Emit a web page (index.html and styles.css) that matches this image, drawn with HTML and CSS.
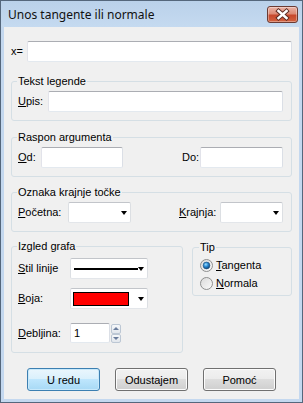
FILE: index.html
```html
<!DOCTYPE html>
<html>
<head>
<meta charset="utf-8">
<link rel="stylesheet" href="styles.css">
<title>Unos tangente ili normale</title>
</head>
<body>
<div class="window">
	<div class="titlebar">
		<span class="title">Unos tangente ili normale</span>
		<div class="close">
			<svg width="31" height="17" viewBox="0 0 31 17">
				<path d="M11.5 5 L19.5 12 M19.5 5 L11.5 12" stroke="#5a2a22" stroke-width="4.4" stroke-linecap="square"/>
				<path d="M11.5 5 L19.5 12 M19.5 5 L11.5 12" stroke="#ffffff" stroke-width="2.5" stroke-linecap="square"/>
			</svg>
		</div>
	</div>
	<div class="client">
		<div class="xrow">
			<label>x=</label>
			<input class="edit" type="text">
		</div>

		<fieldset class="group g-legend">
			<legend>Tekst legende</legend>
			<div class="row r-upis">
				<label><u>U</u>pis:</label>
				<input class="edit" type="text">
			</div>
		</fieldset>

		<fieldset class="group g-range">
			<legend>Raspon argumenta</legend>
			<div class="row r-range">
				<label><u>O</u>d:</label>
				<input class="edit" type="text">
				<span></span>
				<label>Do:</label>
				<input class="edit" type="text">
			</div>
		</fieldset>

		<fieldset class="group g-mark">
			<legend>Oznaka krajnje točke</legend>
			<div class="row r-mark">
				<label><u>P</u>očetna:</label>
				<div class="combo"><span class="arrow"></span></div>
				<span></span>
				<label><u>K</u>rajnja:</label>
				<div class="combo"><span class="arrow"></span></div>
			</div>
		</fieldset>

		<div class="pair">
			<fieldset class="group graph">
				<legend>Izgled grafa</legend>
				<div class="row r-graph">
					<label><u>S</u>til linije</label>
					<div class="combo"><span class="line"></span><span class="arrow"></span></div>
				</div>
				<div class="row r-graph r-color">
					<label><u>B</u>oja:</label>
					<div class="combo"><span class="swatch"></span><span class="arrow"></span></div>
				</div>
				<div class="row r-graph r-width">
					<label><u>D</u>ebljina:</label>
					<div class="spinner">
						<input class="edit" type="text" value="1">
						<div class="spin">
							<div class="spin-btn"><span class="up"></span></div>
							<div class="spin-btn"><span class="down"></span></div>
						</div>
					</div>
				</div>
			</fieldset>

			<fieldset class="group tip">
				<legend>Tip</legend>
				<div class="radio">
					<svg width="13" height="13" viewBox="0 0 13 13">
						<defs>
							<linearGradient id="rb1" x1="0" y1="0" x2="1" y2="1">
								<stop offset="0" stop-color="#d9d9d9"/>
								<stop offset="1" stop-color="#fbfbfb"/>
							</linearGradient>
							<radialGradient id="rdot" cx="0.4" cy="0.35" r="0.7">
								<stop offset="0" stop-color="#9ee0ff"/>
								<stop offset="0.45" stop-color="#2a8ad4"/>
								<stop offset="1" stop-color="#0d3c6b"/>
							</radialGradient>
						</defs>
						<circle cx="6.5" cy="6.5" r="6" fill="url(#rb1)" stroke="#8e8f8f"/>
						<circle cx="6.5" cy="6.5" r="3.4" fill="url(#rdot)" stroke="#1d4f7d" stroke-width="0.6"/>
					</svg>
					<label><u>T</u>angenta</label>
				</div>
				<div class="radio">
					<svg width="13" height="13" viewBox="0 0 13 13">
						<defs>
							<linearGradient id="rb2" x1="0" y1="0" x2="1" y2="1">
								<stop offset="0" stop-color="#d9d9d9"/>
								<stop offset="1" stop-color="#fbfbfb"/>
							</linearGradient>
						</defs>
						<circle cx="6.5" cy="6.5" r="6" fill="url(#rb2)" stroke="#8e8f8f"/>
					</svg>
					<label><u>N</u>ormala</label>
				</div>
			</fieldset>
		</div>

		<div class="buttons">
			<button class="btn default">U redu</button>
			<button class="btn">Odustajem</button>
			<button class="btn">Pomoć</button>
		</div>
	</div>
</div>
</body>
</html>
```

FILE: styles.css
```css
html, body {
  margin: 0;
  padding: 0;
  background: #ffffff;
}

.window {
  box-sizing: border-box;
  width: 303px;
  height: 403px;
  border: 1px solid #55677c;
  padding: 0 3px 3px 3px;
  background: #c4d8ef;
  display: flex;
  flex-direction: column;
  font-family: "Liberation Sans", Arial, sans-serif;
  font-size: 11px;
  color: #000;
}

.titlebar {
  height: 26px;
  margin: 0 -3px;
  padding-left: 7px;
  display: flex;
  align-items: flex-start;
  background: linear-gradient(#bad1ea, #c5daf0);
}

.title {
  font-family: "Noto Sans", "Liberation Sans", sans-serif;
  font-size: 12px;
  line-height: 14px;
  margin-top: 7px;
  color: #111;
  flex: 1;
}

.close {
  box-sizing: border-box;
  width: 31px;
  height: 17px;
  margin: 5px 4px 0 0;
  border: 1px solid #6b3b33;
  border-radius: 3px;
  background: linear-gradient(#eab3a6 0%, #dd8a74 45%, #c7482c 55%, #d2623f 100%);
  box-shadow: inset 0 0 0 1px rgba(255, 255, 255, 0.35);
  display: flex;
  align-items: center;
  justify-content: center;
}

.close svg {
  display: block;
  margin: -1px;
}

.client {
  flex: 1;
  background: #f0f0f0;
  padding: 14px 7px 0 7px;
  display: flex;
  flex-direction: column;
}

label {
  line-height: 13px;
  white-space: nowrap;
}

.edit {
  box-sizing: border-box;
  height: 21px;
  margin: 0;
  padding: 0 3px;
  border: 1px solid;
  border-color: #abadb3 #dbdfe6 #e3e9ef #e2e3ea;
  border-radius: 2px;
  background: #fff;
  font-family: "Liberation Sans", Arial, sans-serif;
  font-size: 11px;
  color: #000;
  outline: none;
  min-width: 0;
  width: 100%;
}

.xrow {
  display: grid;
  grid-template-columns: 16px 1fr;
  align-items: center;
}

.group {
  margin: 10px 0 0 0;
  padding: 3px 8px 8px 6px;
  border: 1px solid #d5dfe5;
  border-radius: 3px;
  min-width: 0;
}

.group legend {
  padding: 0 1px;
  margin-left: -1px;
  line-height: 13px;
}

.g-legend {
  margin-top: 13px;
}

.g-mark {
  margin-top: 9px;
}

.row {
  display: grid;
  align-items: center;
}

.r-upis {
  grid-template-columns: 30px 1fr;
}

.r-range {
  grid-template-columns: 23px 82px 1fr 18px 83px;
}

.r-mark {
  grid-template-columns: 50px 63px 1fr 41px 63px;
}

.combo {
  box-sizing: border-box;
  height: 21px;
  border: 1px solid;
  border-color: #c2c5ca #dcdfe3 #e3e6ea #dcdfe3;
  border-radius: 2px;
  background: #fff;
  display: flex;
  align-items: center;
  padding: 0 3px 0 2px;
}

.arrow {
  margin-left: auto;
  width: 0;
  height: 0;
  border-left: 3.5px solid transparent;
  border-right: 3.5px solid transparent;
  border-top: 4px solid #000;
  margin-top: 1px;
}

.pair {
  display: flex;
  align-items: flex-start;
  margin-top: 8px;
}

.pair .group {
  margin-top: 0;
}

.graph {
  width: 172px;
  box-sizing: border-box;
  padding-top: 5px;
  padding-bottom: 9px;
}

.r-graph {
  grid-template-columns: 52px 78px;
}

.r-color {
  margin-top: 9px;
}

.r-width {
  margin-top: 14px;
}

.line {
  height: 2px;
  width: 65px;
  background: #000;
  margin-left: 1px;
}

.swatch {
  box-sizing: border-box;
  width: 56px;
  height: 14px;
  border: 1px solid #000;
  background: #ff0000;
}

.spinner {
  display: flex;
  align-items: center;
}

.spinner .edit {
  width: 40px;
  height: 20px;
}

.spin {
  display: flex;
  flex-direction: column;
  margin-left: 1px;
}

.spin-btn {
  box-sizing: border-box;
  width: 10px;
  height: 10px;
  border: 1px solid #bcc7d4;
  border-radius: 2px;
  background: linear-gradient(#f6f8fa, #e1e6ec);
  display: flex;
  align-items: center;
  justify-content: center;
}

.spin-btn + .spin-btn {
  height: 9px;
}

.up {
  width: 0;
  height: 0;
  border-left: 3px solid transparent;
  border-right: 3px solid transparent;
  border-bottom: 3px solid #6a7d9c;
}

.down {
  width: 0;
  height: 0;
  border-left: 3px solid transparent;
  border-right: 3px solid transparent;
  border-top: 3px solid #6a7d9c;
}

.pair .tip {
  flex: 1;
  margin: 1px 0 0 9px;
  padding: 2px 6px 3px 7px;
}

.radio {
  display: flex;
  align-items: center;
  height: 18px;
}

.radio svg {
  display: block;
  margin-right: 3px;
}

.buttons {
  margin-top: 15px;
  display: flex;
  justify-content: center;
  gap: 15px;
}

.btn {
  box-sizing: border-box;
  width: 73px;
  height: 23px;
  padding: 0;
  border: 1px solid #707070;
  border-radius: 3px;
  background: linear-gradient(#f2f2f2 0%, #ebebeb 50%, #dddddd 50%, #cfcfcf 100%);
  box-shadow: inset 0 0 0 1px #fcfcfc;
  font-family: "Liberation Sans", Arial, sans-serif;
  font-size: 11px;
  color: #000;
}

.btn.default {
  border-color: #3c7fb1;
  background: linear-gradient(#eaf6fd 0%, #d9f0fc 50%, #bee6fd 50%, #a7d9f5 100%);
  box-shadow: inset 0 0 0 1px #c8e9fb;
}
```
